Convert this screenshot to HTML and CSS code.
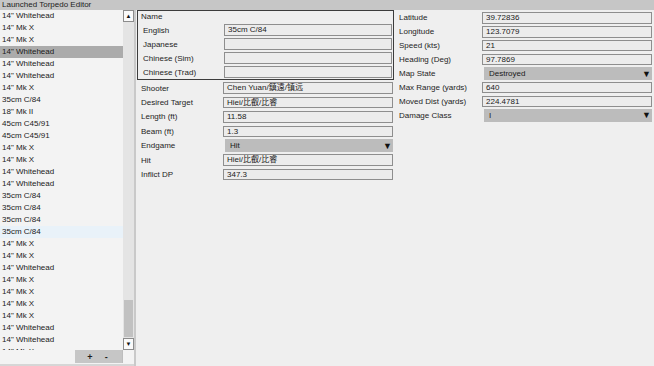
FILE: index.html
```html
<!DOCTYPE html>
<html>
<head>
<meta charset="utf-8">
<link rel="stylesheet" href="styles.css">
</head>
<body>
<div class="title">Launched Torpedo Editor</div>
<div class="main">
  <div class="sidebar">
    <div class="list-area">
      <ul class="list">
        <li>14" Whitehead</li>
        <li>14" Mk X</li>
        <li>14" Mk X</li>
        <li class="selected">14" Whitehead</li>
        <li>14" Whitehead</li>
        <li>14" Whitehead</li>
        <li>14" Mk X</li>
        <li>35cm C/84</li>
        <li>18" Mk II</li>
        <li>45cm C45/91</li>
        <li>45cm C45/91</li>
        <li>14" Mk X</li>
        <li>14" Mk X</li>
        <li>14" Whitehead</li>
        <li>14" Whitehead</li>
        <li>35cm C/84</li>
        <li>35cm C/84</li>
        <li>35cm C/84</li>
        <li class="hover">35cm C/84</li>
        <li>14" Mk X</li>
        <li>14" Mk X</li>
        <li>14" Whitehead</li>
        <li>14" Mk X</li>
        <li>14" Mk X</li>
        <li>14" Mk X</li>
        <li>14" Mk X</li>
        <li>14" Whitehead</li>
        <li>14" Whitehead</li>
        <li>14" Mk X</li>
      </ul>
      <div class="scrollbar">
        <div class="sb-btn">▲</div>
        <div class="sb-track"><div class="sb-thumb"></div></div>
        <div class="sb-btn">▼</div>
      </div>
    </div>
    <div class="footer">
      <div class="pm"><span>+</span><span>-</span></div>
    </div>
  </div>
  <div class="content">
    <div class="col-left">
      <div class="group">
        <div class="group-title">Name</div>
        <div class="grow"><span class="lbl">English</span><span class="field">35cm C/84</span></div>
        <div class="grow"><span class="lbl">Japanese</span><span class="field"></span></div>
        <div class="grow"><span class="lbl">Chinese (Sim)</span><span class="field"></span></div>
        <div class="grow"><span class="lbl">Chinese (Trad)</span><span class="field"></span></div>
      </div>
      <div class="rows">
        <div class="row"><span class="lbl">Shooter</span><span class="field">Chen Yuan/鎮遠/镇远</span></div>
        <div class="row"><span class="lbl">Desired Target</span><span class="field">Hiei/比叡/比睿</span></div>
        <div class="row"><span class="lbl">Length (ft)</span><span class="field">11.58</span></div>
        <div class="row"><span class="lbl">Beam (ft)</span><span class="field">1.3</span></div>
        <div class="row"><span class="lbl">Endgame</span><span class="select">Hit<i>▼</i></span></div>
        <div class="row"><span class="lbl">Hit</span><span class="field">Hiei/比叡/比睿</span></div>
        <div class="row"><span class="lbl">Inflict DP</span><span class="field">347.3</span></div>
      </div>
    </div>
    <div class="col-right">
      <div class="rrow"><span class="lbl">Latitude</span><span class="field">39.72836</span></div>
      <div class="rrow"><span class="lbl">Longitude</span><span class="field">123.7079</span></div>
      <div class="rrow"><span class="lbl">Speed (kts)</span><span class="field">21</span></div>
      <div class="rrow"><span class="lbl">Heading (Deg)</span><span class="field">97.7869</span></div>
      <div class="rrow"><span class="lbl">Map State</span><span class="select">Destroyed<i>▼</i></span></div>
      <div class="rrow"><span class="lbl">Max Range (yards)</span><span class="field">640</span></div>
      <div class="rrow"><span class="lbl">Moved Dist (yards)</span><span class="field">224.4781</span></div>
      <div class="rrow"><span class="lbl">Damage Class</span><span class="select">I<i>▼</i></span></div>
    </div>
  </div>
</div>
</body>
</html>
```
FILE: styles.css
```css
* { box-sizing: border-box; }
html, body {
  margin: 0;
  padding: 0;
}
body {
  width: 654px;
  height: 366px;
  overflow: hidden;
  background: #efefef;
  font-family: "Liberation Sans", Arial, "Noto Sans CJK JP", sans-serif;
  font-size: 8px;
  color: #1e1e1e;
}
.title {
  height: 10px;
  line-height: 9px;
  padding-left: 2px;
  background: #c6c6c6;
  color: #222;
}
.main {
  display: flex;
  height: 356px;
}
.sidebar {
  width: 136px;
  display: flex;
  flex-direction: column;
  border-right: 2px solid #c9c9c9;
}
.list-area {
  display: flex;
  height: 340px;
}
.list {
  list-style: none;
  margin: 0;
  padding: 0;
  width: 123px;
  background: #f3f3f3;
  overflow: hidden;
}
.list li {
  height: 12px;
  line-height: 12px;
  padding-left: 2px;
  white-space: nowrap;
  color: #1a1a1a;
}
.list li.selected { background: #ababab; }
.list li.hover { background: #e9f2f9; }
.scrollbar {
  width: 11px;
  display: flex;
  flex-direction: column;
  background: #e4e4e4;
}
.sb-btn {
  height: 12px;
  background: #fafafa;
  border: 1px solid #8c8c8c;
  font-size: 6px;
  line-height: 10px;
  text-align: center;
  color: #111;
}
.sb-track {
  flex: 1;
  display: flex;
  flex-direction: column;
  justify-content: flex-end;
  padding: 0 1px 1px;
}
.sb-thumb {
  height: 37px;
  background: #c1c1c1;
}
.footer {
  flex: 1;
  background: #f3f3f3;
  display: flex;
  justify-content: flex-end;
  align-items: flex-start;
  border-bottom: 2px solid #d6d6d6;
  padding-right: 11px;
}
.pm {
  width: 48px;
  height: 13px;
  background: #c6c6c6;
  border-right: 1px solid #bdbdbd;
  display: flex;
  justify-content: space-around;
  align-items: center;
  font-size: 9px;
  font-weight: bold;
  padding: 0 8px 0 6px;
}
.content {
  flex: 1;
  display: flex;
}
.col-left {
  width: 258px;
}
.group {
  margin-left: 1px;
  width: 257px;
  height: 70px;
  border: 1px solid #3c3c3c;
  padding: 0 1px 0 3px;
}
.group-title {
  height: 12px;
  line-height: 12px;
}
.grow {
  display: flex;
  align-items: center;
  height: 14px;
}
.grow .lbl {
  width: 83px;
  padding-left: 2px;
}
.grow .field {
  width: 168px;
}
.lbl {
  white-space: nowrap;
  color: #242424;
}
.field {
  display: block;
  height: 12px;
  line-height: 10px;
  background: #ececec;
  border: 1px solid #8e8e8e;
  padding-left: 3px;
  white-space: nowrap;
  overflow: hidden;
  color: #1a1a1a;
}
.rows {
  padding-top: 1px;
}
.row {
  display: flex;
  align-items: center;
  height: 14.4px;
  padding-left: 5px;
}
.row .lbl {
  width: 82px;
}
.row .field {
  width: 170px;
  height: 11.5px;
}
.select {
  display: flex;
  justify-content: space-between;
  align-items: center;
  height: 13px;
  background: #bcbcbc;
  padding: 0 1px 0 5px;
  color: #1a1a1a;
}
.select i {
  font-style: normal;
  font-size: 9px;
  color: #111;
}
.row .select {
  width: 168px;
  margin-left: 2px;
}
.col-right {
  flex: 1;
  padding: 1px 2px 0 5px;
}
.rrow {
  display: flex;
  align-items: center;
  height: 13.9px;
}
.rrow .lbl {
  width: 83px;
}
.rrow .field {
  width: 170px;
  height: 11.5px;
}
.rrow .select {
  width: 168px;
  margin-left: 2px;
}
```
